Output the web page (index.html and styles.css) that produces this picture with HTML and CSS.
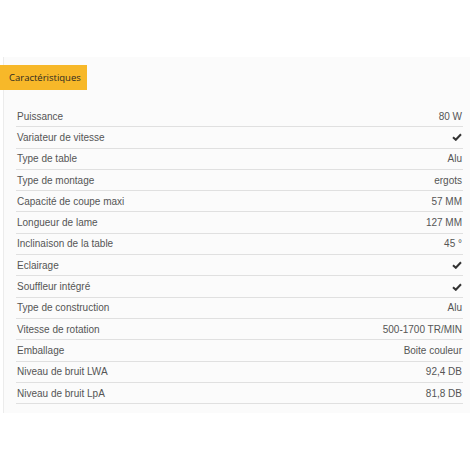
FILE: index.html
```html
<!DOCTYPE html>
<html lang="fr">
<head>
<meta charset="utf-8">
<link rel="stylesheet" href="styles.css">
</head>
<body>
<div class="panel">
  <div class="tab">Caractéristiques</div>
  <ul class="specs">
    <li class="row"><span>Puissance</span><span>80 W</span></li>
    <li class="row"><span>Variateur de vitesse</span><span class="check"><svg viewBox="0 0 10 8" width="10" height="8"><path d="M1 4.2 L3.8 6.8 L9 1.2" fill="none" stroke="#333" stroke-width="2"/></svg></span></li>
    <li class="row"><span>Type de table</span><span>Alu</span></li>
    <li class="row"><span>Type de montage</span><span>ergots</span></li>
    <li class="row"><span>Capacité de coupe maxi</span><span>57 MM</span></li>
    <li class="row"><span>Longueur de lame</span><span>127 MM</span></li>
    <li class="row"><span>Inclinaison de la table</span><span>45 °</span></li>
    <li class="row"><span>Eclairage</span><span class="check"><svg viewBox="0 0 10 8" width="10" height="8"><path d="M1 4.2 L3.8 6.8 L9 1.2" fill="none" stroke="#333" stroke-width="2"/></svg></span></li>
    <li class="row"><span>Souffleur intégré</span><span class="check"><svg viewBox="0 0 10 8" width="10" height="8"><path d="M1 4.2 L3.8 6.8 L9 1.2" fill="none" stroke="#333" stroke-width="2"/></svg></span></li>
    <li class="row"><span>Type de construction</span><span>Alu</span></li>
    <li class="row"><span>Vitesse de rotation</span><span>500-1700 TR/MIN</span></li>
    <li class="row"><span>Emballage</span><span>Boite couleur</span></li>
    <li class="row"><span>Niveau de bruit LWA</span><span>92,4 DB</span></li>
    <li class="row"><span>Niveau de bruit LpA</span><span>81,8 DB</span></li>
  </ul>
</div>
</body>
</html>
```
FILE: styles.css
```css
html, body {
  margin: 0;
  padding: 0;
  background: #ffffff;
}
.panel {
  margin-top: 57px;
  margin-left: 3px;
  height: 356px;
  box-sizing: border-box;
  background: #fbfbfb;
  border-left: 1px solid #ececec;
  padding-top: 8px;
}
.tab {
  margin-left: -4px;
  width: 87px;
  height: 25px;
  box-sizing: border-box;
  background: #f7b829;
  color: #2e2a22;
  font-family: "Open Sans", sans-serif;
  font-size: 9.5px;
  line-height: 25px;
  padding-left: 9px;
  white-space: nowrap;
}
.specs {
  list-style: none;
  margin: 16px 0 0 12px;
  padding: 0;
  width: 447px;
}
.row {
  display: flex;
  justify-content: space-between;
  align-items: center;
  height: 20.3px;
  border-bottom: 1px solid #e0e0e0;
  font-family: "Liberation Sans", Arial, sans-serif;
  font-size: 10px;
  color: #555;
  padding: 0 1px;
}
.check {
  display: flex;
  align-items: center;
}
```
